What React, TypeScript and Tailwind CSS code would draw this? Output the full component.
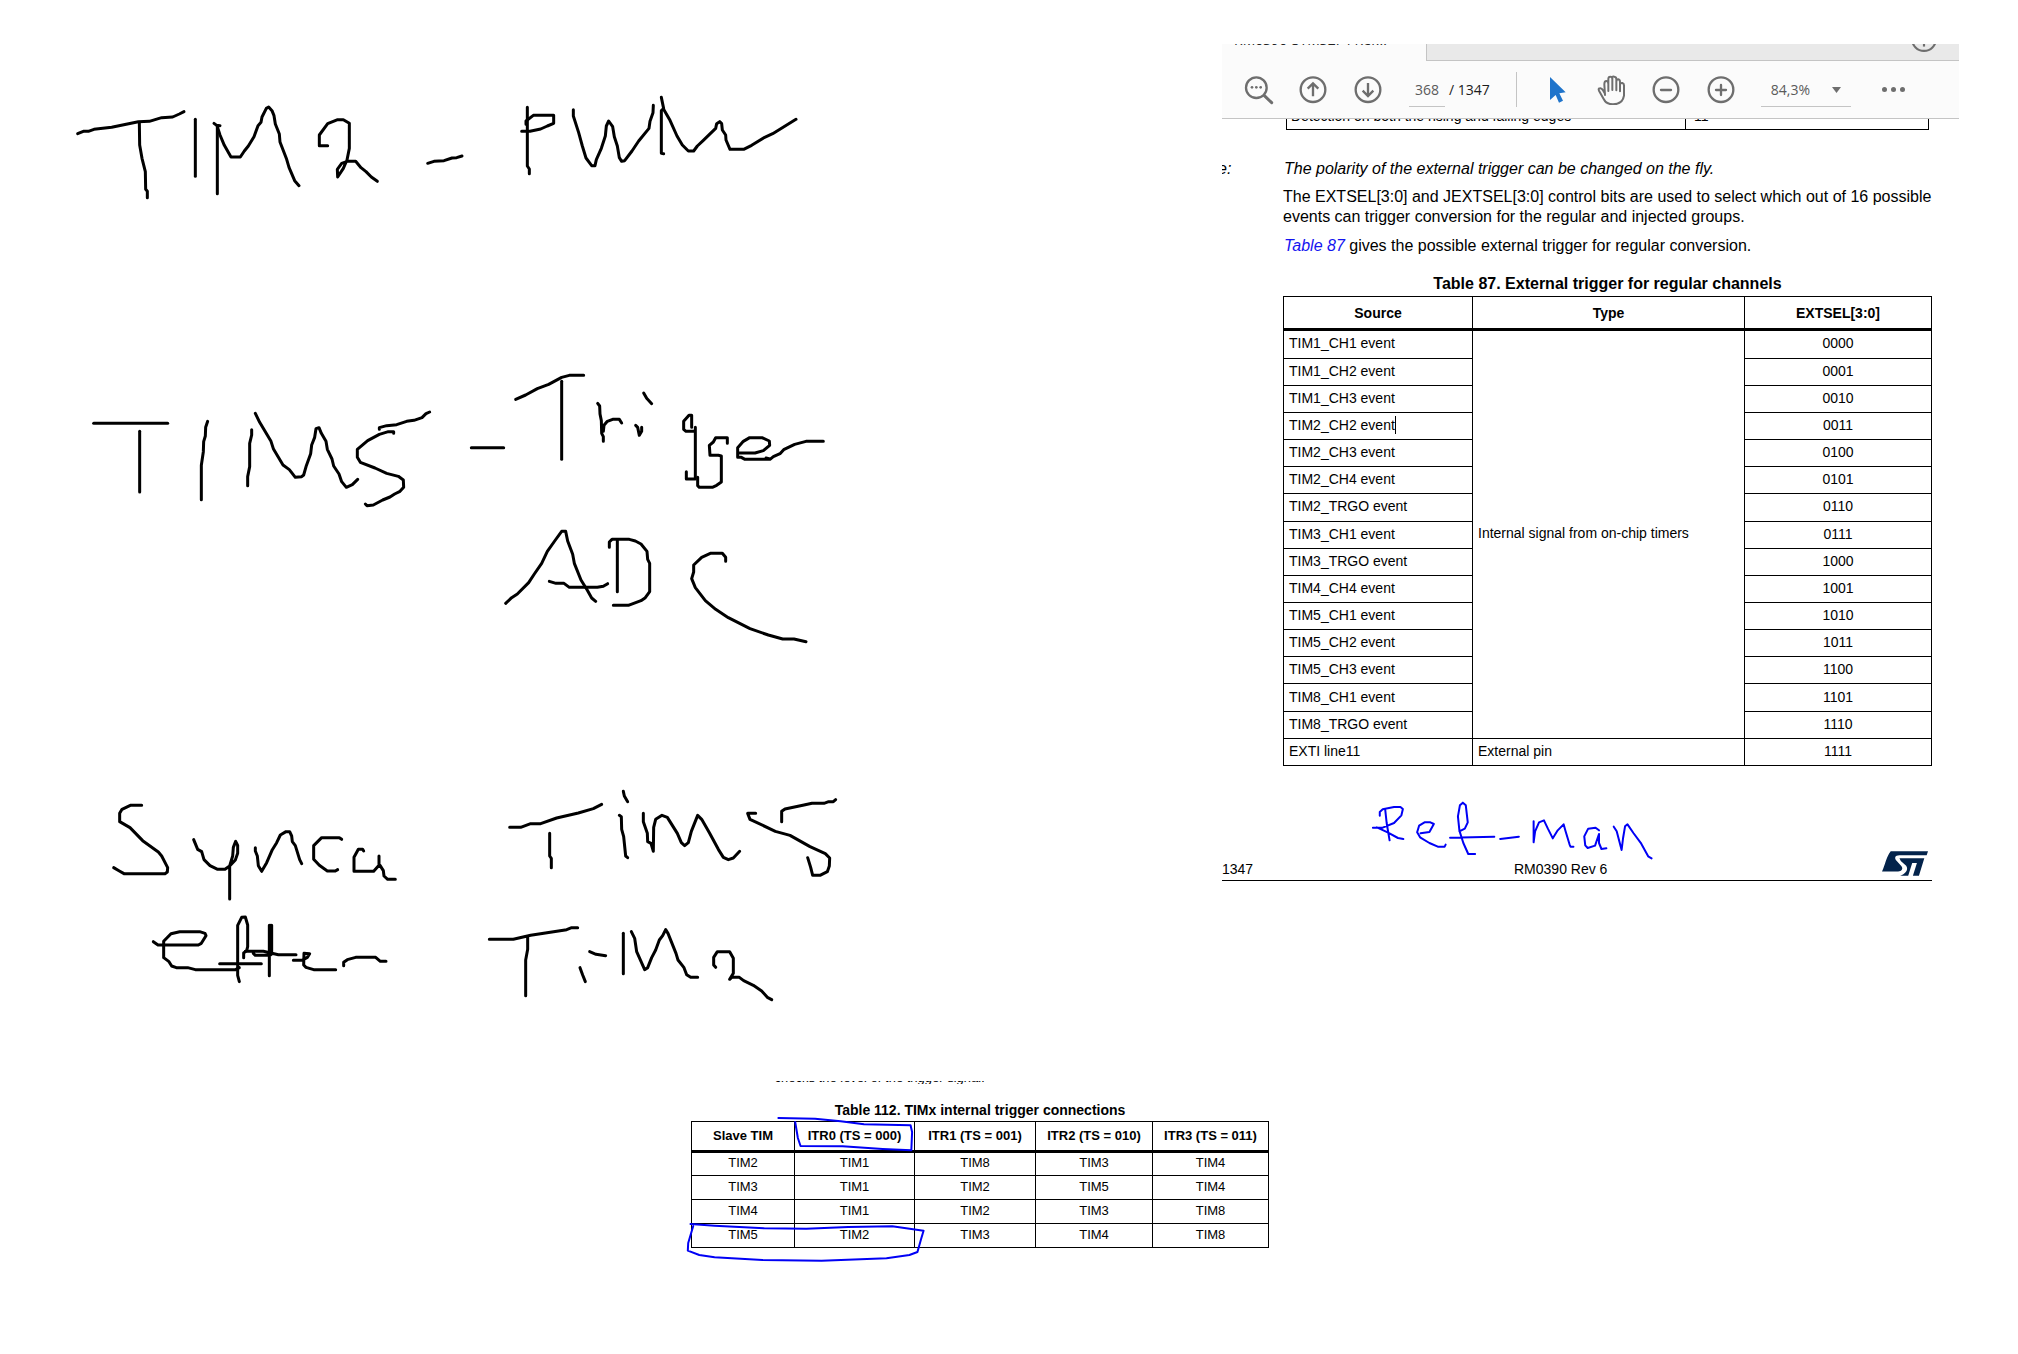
import React from "react";

type InkProps = { label: string; viewBox: string; className: string; strokes: string[] };

function Ink({ label, viewBox, className, strokes }: InkProps) {
  return (
    <svg
      role="img"
      aria-label={label}
      viewBox={viewBox}
      preserveAspectRatio="none"
      className={`block shrink-0 overflow-visible fill-none [stroke-linecap:round] [stroke-linejoin:round] ${className}`}
    >
      {strokes.map((d, i) => (
        <path key={i} d={d} vectorEffect="non-scaling-stroke" />
      ))}
    </svg>
  );
}

const black = "stroke-black stroke-[3px]";
const blue = "stroke-[#0000f5] stroke-2";

const tim2 = [
  "M53 161 L70 154 L85 154 L102 148 L155 142 L235 125 L268 124 L305 113 L338 111 L358 102 L372 95",
  "M238 128 L239 195 L246 235 L256 275 L257 328 L262 334 L262 353",
  "M406 118 V289",
  "M462 130 L470 136 L480 137 M472 137 V341",
  "M472 140 L480 165 L493 196 L513 231 L541 231 L553 213 L565 198 L582 170 L594 137 L603 127 L606 111 L619 85 L626 81 L636 92 L642 107 L646 132 L658 162 L660 186 L680 238 L687 262 L704 302 L717 317",
  "M803 197 H778 V165 L803 131 L833 119 L850 119 L868 130 V205 L861 240 L850 265 L833 291 L832 268 L845 250 L862 244 H887 L903 263 L918 275 L934 291 L952 304",
];
const pwm = [
  "M23 250 L42 244 L72 242 L96 234 L110 233 L126 228",
  "M322 82 V258 L328 267 V281",
  "M318 133 L318 123 L340 106 H401 V130 L382 138 L362 147 L330 154 H305",
  "M460 89 V108 L476 158 L487 198 L498 234 L515 257 H525 L529 239 L544 205 L556 168 L559 138 L566 123 L578 140 L583 170 L592 198 L598 233 L605 244 L614 242 L636 213 L656 183 L687 145 L690 124 L699 98 L700 76",
  "M724 52 L731 86 L724 92 V220 L731 221",
  "M730 86 L750 121 L771 168 L787 195 L805 213 H821 L832 198 L850 181 L887 145 L890 131 L899 125 L905 131 L907 150 L917 165 L918 180 L930 208 H971 L995 196 L1034 172 L1058 161 L1128 118",
];
const tim5 = [
  "M41 190 H263",
  "M179 214 V396",
  "M383 184 L377 202 L376 228 L371 245 L370 275 L364 316 V419",
  "M515 209 V225 L509 250 V320 L503 350 V377",
  "M526 160 L539 187 L573 244 L580 266 L609 315 L628 329 L646 352 L665 350 L671 345 L679 317 L692 281 L695 255 L704 232 L708 206 L717 203 L724 220 L738 244 L742 268 L756 297 L761 318 L777 342 L785 365 L799 382 L817 374 L833 358",
  "M898 208 V203 L920 197 L950 194 L980 184 L1002 181 L1026 173 L1038 161 L1049 156",
  "M941 220 V215 L925 215 L898 223 L863 242 L832 268 L832 292 L841 307 L885 324 L920 340 L955 349 L970 360 L971 382 L960 394 L944 402 L930 411 L908 420 L880 435 L861 437 L856 432",
];
const triggerAdc = [
  "M34 263 H131",
  "M167 118 L197 105 L232 86 L266 73 L305 52 L328 46 H371",
  "M305 64 V298",
  "M413 130 L419 138 L420 162 L424 182 L425 220 L430 230 V244 M430 214 L432 196 L442 184 L458 178 H478 L485 189",
  "M551 99 L560 115 L575 131 M527 196 L533 202 L538 226 L545 214 V202",
  "M695 202 V166 L687 166 L671 184 V208 L678 214 H705 M706 202 V357 H679 V335",
  "M713 352 V377 L718 382 H757 L770 376 L784 366 V288 L775 286 H750 L748 256 L760 246 L767 233 H802 V250",
  "M836 279 H885 L910 272 L929 256 L928 243 L906 233 H869 L850 244 L833 263 V292 H844 L855 298 H930 L940 290 L960 281 L971 269 L1004 253 L1038 244 H1090 M918 294 L930 297",
  "M137 730 L155 713 L172 702 L206 668 L223 642 L245 610 L262 574 L284 543 L305 514 H317 L323 543 L338 583 L343 610 L363 660 L382 691 L395 714 L407 724",
  "M268 664 L288 670 H312 L328 682 H412 L430 679 L443 671",
  "M448 562 V546 L456 538 H508 L526 543 L543 552 L561 574 L563 598 L569 610 V695 L556 713 L543 722 L505 736 H460 M472 543 V695",
  "M797 604 V592 L787 580 H751 L725 592 L701 615 V636 L695 656 L706 683 L736 722 L767 748 L805 773 L870 806 L925 825 L968 837 H1002 L1038 845",
];
const syncaEtter = [
  "M125 76 H91 L66 88 L59 100 V125 L90 143 L128 182 L175 216 L185 228 L203 263 L202 276 L195 281 H72 L58 273 L41 263",
  "M281 179 L293 208 L305 215 L312 239 L330 257 L353 268 H375 L389 258 L406 240 L413 220 V196 L407 184 L400 202 L398 228 L389 258 V357",
  "M466 203 V213 L472 228 L475 257 L485 274 L500 248 L517 209 L530 188 L541 165 L558 155 L569 155 L575 168 L577 185 L586 197 L599 239 L605 251",
  "M725 178 L718 173 H665 L641 197 V238 L658 256 L682 273 H706 L713 269",
  "M791 213 L788 208 H775 L762 232 V274 H821 L837 256 V228 M840 256 L850 272 L852 288 L863 298 H886",
  "M160 485 L174 495 H295 L304 490 L318 467 L315 460 L299 455 H239 L213 461 L191 484 V533 L207 545 L215 558 L229 563 H263 L286 569 H407 L418 563",
  "M431 533 L431 519 L440 512 L443 500 V435 L436 411 L425 412 L413 436 V586 L418 605 M359 551 H484",
  "M436 514 H490 L535 524 H588 M460 520 L466 526 H510 M512 436 V524 M508 436 V587 M515 436 V522",
  "M580 541 H606 L622 532 L629 521 L612 520 L611 555 L618 562 L641 569 H707",
  "M731 557 V547 L742 539 L767 532 H827 L841 544 H858",
];
const tim5tim2 = [
  "M119 142 H152 L182 131 H212 L260 114 L325 99 L370 86 L395 73",
  "M239 160 V228 L244 235 V263",
  "M448 106 L454 110 L455 148 L461 170 L467 228 L473 233 M460 34 L463 48 L473 65",
  "M520 100 V125 L532 160 L533 185 L543 190 L550 214 L551 142 L557 118 L576 106 L592 112 L622 160 L634 188 L644 197 L655 188 L664 154 L683 106 L695 118 L719 160 L745 208 L760 232 L775 239 L790 234 L809 214",
  "M857 100 H833 L840 118 L916 154 L960 166 L1020 200 L1066 221 L1079 234 L1078 258 L1072 275 L1050 286 H1028 L1022 262 L1013 233",
  "M935 125 V94 L945 87 L1002 75 L1026 70 H1062 L1076 65 H1090 L1097 59",
  "M58 478 H130 L182 466 L290 449 L305 443 H323 M173 468 V508 L167 540 V647",
  "M359 515 L378 523 L407 527 M330 563 L338 585 L346 605",
  "M460 460 V581",
  "M484 455 L494 475 L500 515 L524 569 L533 563 L545 533 L557 510 L568 480 L578 467 L587 449 L594 460 L618 520 L624 540 L642 563 L650 584 L662 592 H683",
  "M737 562 L731 555 V532 L742 515 H779 L790 535 V580 L779 598 L785 592 H808 L821 602 L850 616 L875 633 L892 652 L905 659",
];
const refMan = [
  "M332 259 H352 L375 245 L390 222 L393 203 L388 197 H375 L352 204 L346 212 V223 M357 204 L360 245 L366 297 M340 258 L362 273 L383 290 L394 293",
  "M429 276 L447 272 L456 248 L449 243 H437 L426 253 L422 273 L428 288 L447 305 L464 316 H478 L480 310",
  "M489 289 L579 286 M508 270 L519 262 L525 243 L521 192 L515 184 L509 192 L505 225 L508 268 L516 305 L526 338 H540",
  "M591 293 L629 286",
  "M659 240 V303 L662 270 L670 243 L680 237 L688 262 L698 291 L708 267 L720 249 L724 270 L732 309 L734 316 H740",
  "M792 267 L785 259 L770 262 L762 285 L764 312 L769 320 L784 313 L792 278 V305 L797 323 L807 321",
  "M822 256 L828 270 L838 326 L841 290 L845 255 L850 249 L862 275 L878 307 L892 345 L899 351",
];
const marks = [
  "M257 145 L353 147 L420 155 L481 164 L603 167 L607 187 L605 242 L530 238 L425 230 L315 229 L308 205 L301 157",
  "M27 463 L90 468 L220 476 L330 477 L440 472 L555 470 L637 483 L630 510 L621 547 L600 556 L540 566 L370 573 L215 571 L90 563 L50 556 L20 543 L21 520 L34 470",
];

const iconCls = "block h-[30px] w-[30px] fill-none stroke-[#6e6e6e] [stroke-linecap:round]";

function Icon({ label, className, children }: { label: string; className: string; children: React.ReactNode }) {
  return (
    <button type="button" aria-label={label} className={`shrink-0 ${className}`}>
      <svg viewBox="0 0 90 90" className={iconCls} strokeWidth="7">
        {children}
      </svg>
    </button>
  );
}

function Toolbar() {
  return (
    <header className="font-['Open_Sans','Noto_Sans',sans-serif]">
      <div className="flex h-[17px] bg-[#e9e9e9]">
        <div className="h-full w-[205px] overflow-hidden border-r border-[#c4c4c4] bg-[#fbfbfb]">
          <div className="-mt-3 pl-3 text-sm leading-[16px] text-[#222]">RM0390-STM32F4 Ref...</div>
        </div>
        <div className="flex flex-1 justify-end overflow-hidden border-b border-[#c4c4c4] pr-[22px]">
          <svg viewBox="0 0 24 24" className="-mt-[18px] block h-[26px] w-[26px] fill-none stroke-[#6e6e6e] stroke-2">
            <circle cx="12" cy="12" r="11" />
            <path d="M12 8v11" />
          </svg>
        </div>
      </div>
      <div className="flex h-[58px] items-center border-b border-[#c4c4c4] bg-[#fbfbfb] text-sm text-[#5a5a5a]">
        <Icon label="Find" className="ml-[22px]">
          <circle cx="37" cy="38" r="31" />
          <path d="M61 62 L83 83" strokeWidth="9" />
          <g className="fill-[#6e6e6e] stroke-none">
            <circle cx="24" cy="37" r="4" />
            <circle cx="37" cy="37" r="4" />
            <circle cx="50" cy="37" r="4" />
          </g>
        </Icon>
        <Icon label="Previous page" className="ml-6">
          <circle cx="45" cy="44" r="37" />
          <path d="M45 64 V26 M29 41 L45 25 L61 41" strokeWidth="7" strokeLinecap="butt" />
        </Icon>
        <Icon label="Next page" className="ml-[25px]">
          <circle cx="45" cy="44" r="37" />
          <path d="M45 24 V62 M29 47 L45 63 L61 47" strokeWidth="7" strokeLinecap="butt" />
        </Icon>
        <input
          aria-label="Page number"
          defaultValue="368"
          className="ml-[26px] mt-px h-[34px] w-9 border-b border-[#c4c4c4] bg-transparent text-center outline-none"
        />
        <span className="ml-1 whitespace-pre text-[#1c1c1c]">/ 1347</span>
        <span className="ml-[26px] h-[35px] w-px shrink-0 bg-[#c4c4c4]" />
        <button type="button" aria-label="Select" className="ml-[33px]">
          <svg viewBox="0 0 48 78" className="block h-[26px] w-4 fill-[#1f74cb]">
            <path d="M0 0 L47 46 L28 49 L39 71 L27 77 L17 54 L0 69 Z" />
          </svg>
        </button>
        <Icon label="Hand" className="ml-[31px]">
          <path
            strokeWidth="6"
            strokeLinejoin="round"
            d="M24 60 L22 28 Q22 18 28 18 Q34 18 34 28 V48 V12 Q34 5 40 5 Q46 5 46 12 V45 V9 Q46 3 52 5 Q58 6 58 12 V46 V20 Q58 13 64 13 Q69 14 69 21 V49 V30 Q70 23 76 24 Q82 26 81 34 V62 Q77 88 48 88 Q28 88 20 72 L6 47 Q3 40 9 40 Q14 39 18 46 L24 56"
          />
        </Icon>
        <Icon label="Zoom out" className="ml-6">
          <circle cx="45" cy="44" r="37" />
          <path d="M30 45 H60" strokeWidth="7" />
        </Icon>
        <Icon label="Zoom in" className="ml-[25px]">
          <circle cx="45" cy="44" r="37" />
          <path d="M30 45 H60 M45 30 V60" strokeWidth="7" />
        </Icon>
        <div className="relative ml-[25px] mt-px">
          <select aria-label="Zoom level" className="h-[34px] w-[90px] appearance-none border-b border-[#c4c4c4] bg-transparent pl-2.5 outline-none">
            <option>84,3%</option>
          </select>
          <svg viewBox="0 0 9 6" className="pointer-events-none absolute right-2.5 top-3.5 h-1.5 w-[9px] fill-[#6e6e6e]">
            <path d="M0 0 H9 L4.5 6 Z" />
          </svg>
        </div>
        <button type="button" aria-label="More tools" className="ml-[31px] flex gap-1">
          <span className="size-[5px] rounded-full bg-[#6e6e6e]" />
          <span className="size-[5px] rounded-full bg-[#6e6e6e]" />
          <span className="size-[5px] rounded-full bg-[#6e6e6e]" />
        </button>
      </div>
    </header>
  );
}

const sources = [
  "TIM1_CH1", "TIM1_CH2", "TIM1_CH3", "TIM2_CH2", "TIM2_CH3", "TIM2_CH4", "TIM2_TRGO", "TIM3_CH1",
  "TIM3_TRGO", "TIM4_CH4", "TIM5_CH1", "TIM5_CH2", "TIM5_CH3", "TIM8_CH1", "TIM8_TRGO",
];
const code = (n: number) => n.toString(2).padStart(4, "0");

function TriggerTable() {
  return (
    <table className="h-[470px] w-full table-fixed border-collapse text-sm leading-4">
      <caption className="pb-0.5 text-base font-bold leading-5">Table 87. External trigger for regular channels</caption>
      <colgroup>
        <col className="w-[189px]" />
        <col />
        <col className="w-[187px]" />
      </colgroup>
      <thead>
        <tr className="h-[33px]">
          <th scope="col" className="border border-b-3 border-black p-0">Source</th>
          <th scope="col" className="border border-b-3 border-black p-0">Type</th>
          <th scope="col" className="border border-b-3 border-black p-0">EXTSEL[3:0]</th>
        </tr>
      </thead>
      <tbody>
        {sources.map((s, i) => (
          <tr key={s}>
            <td className="border border-black pt-0 pr-0 pb-0.5 pl-[5px]">
              <span className={s === "TIM2_CH2" ? "border-r border-black py-px" : ""}>{s} event</span>
            </td>
            {i === 0 && (
              <td rowSpan={15} className="border border-black pt-0 pr-0 pb-0.5 pl-[5px]">
                Internal signal from on-chip timers
              </td>
            )}
            <td className="border border-black p-0 pb-0.5 text-center">{code(i)}</td>
          </tr>
        ))}
        <tr>
          <td className="border border-black pt-0 pr-0 pb-0.5 pl-[5px]">EXTI line11</td>
          <td className="border border-black pt-0 pr-0 pb-0.5 pl-[5px]">External pin</td>
          <td className="border border-black p-0 pb-0.5 text-center">1111</td>
        </tr>
      </tbody>
    </table>
  );
}

function ManualPage() {
  return (
    <section className="w-[737px] shrink-0">
      <Toolbar />
      <div className="ml-16 mr-[30px] flex h-[11px] items-end overflow-hidden border-x border-b border-black text-sm leading-4">
        <div className="w-[399px] shrink-0 border-r border-black pb-[5px] pl-1">Detection on both the rising and falling edges</div>
        <div className="pb-[5px] pl-2">11</div>
      </div>
      <div className="mt-[29px] flex text-base leading-5">
        <div className="w-[61px] shrink-0 overflow-hidden">
          <span className="-ml-1 italic">e:</span>
        </div>
        <div className="flex-1">
          <p className="pl-px italic">The polarity of the external trigger can be changed on the fly.</p>
          <p className="mt-2 whitespace-nowrap">
            The EXTSEL[3:0] and JEXTSEL[3:0] control bits are used to select which out of 16 possible
            <br />
            events can trigger conversion for the regular and injected groups.
          </p>
          <p className="mt-[9px] pl-px">
            <a href="#table-87" className="italic text-[#1414f0]">Table 87</a> gives the possible external trigger for regular conversion.
          </p>
        </div>
      </div>
      <div id="table-87" className="ml-[61px] mr-[27px] mt-[18px]">
        <TriggerTable />
      </div>
      <div className="relative mr-[27px] mt-[84px] flex h-[31px] items-start border-b border-black text-sm">
        <span className="mt-[11px] w-[292px] leading-4">1347</span>
        <span className="mt-[11px] flex-1 leading-4">RM0390 Rev 6</span>
        <svg viewBox="16 17 137 73" role="img" aria-label="ST" className="mr-1 mt-px h-[25px] w-[46px] fill-[#03234b]">
          <path d="M42 17 H153 L149 29 H68 C54 29 52 38 60 46 L74 62 C80 70 74 77 64 77 H16 C26 58 28 34 42 17 Z" />
          <path d="M68 38 H142 L126 90 H108 L120 52 H106 L94 90 H70 C86 84 96 72 88 60 L72 46 Z" />
        </svg>
        <div className="absolute -top-[52px] left-[145px]">
          <Ink label="Ref-man" viewBox="320 170 590 189" className={`h-[63px] w-[290px] ${blue}`} strokes={refMan} />
        </div>
      </div>
    </section>
  );
}

const connections = [
  ["TIM2", "TIM1", "TIM8", "TIM3", "TIM4"],
  ["TIM3", "TIM1", "TIM2", "TIM5", "TIM4"],
  ["TIM4", "TIM1", "TIM2", "TIM3", "TIM8"],
  ["TIM5", "TIM2", "TIM3", "TIM4", "TIM8"],
];

function ConnectionsTable() {
  return (
    <section className="relative ml-[691px] w-[578px]">
      <div className="h-[3px] overflow-hidden">
        <p className="-mt-[11px] pl-[84px] text-[13px] leading-4 italic">checks the level of the trigger signal.</p>
      </div>
      <table className="mt-[17px] w-full table-fixed border-collapse text-[13px] leading-4">
        <caption className="pb-0.5 text-sm font-bold leading-[18px]">Table 112. TIMx internal trigger connections</caption>
        <colgroup>
          <col className="w-[103px]" />
          <col className="w-[120px]" />
          <col className="w-[121px]" />
          <col className="w-[117px]" />
          <col />
        </colgroup>
        <thead>
          <tr className="h-[30px]">
            {["Slave TIM", "ITR0 (TS = 000)", "ITR1 (TS = 001)", "ITR2 (TS = 010)", "ITR3 (TS = 011)"].map((h) => (
              <th key={h} scope="col" className="border border-b-3 border-black p-0">{h}</th>
            ))}
          </tr>
        </thead>
        <tbody>
          {connections.map((row) => (
            <tr key={row[0]} className="h-6">
              {row.map((cell, i) => (
                <td key={i} className="border border-black p-0 pb-0.5 text-center">{cell}</td>
              ))}
            </tr>
          ))}
        </tbody>
      </table>
      <div className="pointer-events-none absolute -left-[7px] top-9">
        <Ink label="Highlighted cells" viewBox="10 142 636 435" className={`h-[145px] w-[243px] ${blue}`} strokes={marks} />
      </div>
    </section>
  );
}

export default function App() {
  return (
    <main className="bg-white pt-11 pb-20 font-['Liberation_Sans',Arial,sans-serif] text-black">
      <div className="flex items-start justify-between pr-[59px]">
        <div className="pt-9">
          <div className="flex pl-[60px]">
            <Ink label="TIM2" viewBox="0 0 1080 390" className={`h-[130px] w-[360px] ${black}`} strokes={tim2} />
            <Ink label="- PWM" viewBox="0 0 1200 390" className={`h-[130px] w-[400px] ${black}`} strokes={pwm} />
          </div>
          <div className="mt-[150px] flex items-start pl-20">
            <Ink label="TIM5" viewBox="0 0 1140 480" className={`h-[160px] w-[380px] ${black}`} strokes={tim5} />
            <Ink label="- Trigger ADC" viewBox="0 0 1140 900" className={`h-[300px] w-[380px] ${black}`} strokes={triggerAdc} />
          </div>
          <div className="mt-[120px] flex items-start pl-[100px]">
            <Ink label="Synca etter" viewBox="0 0 960 660" className={`mr-[50px] h-[220px] w-[320px] ${black}`} strokes={syncaEtter} />
            <Ink label="Tim5 Tim2" viewBox="0 0 1140 690" className={`h-[230px] w-[380px] ${black}`} strokes={tim5tim2} />
          </div>
        </div>
        <ManualPage />
      </div>
      <div className="mt-[71px]">
        <ConnectionsTable />
      </div>
    </main>
  );
}
